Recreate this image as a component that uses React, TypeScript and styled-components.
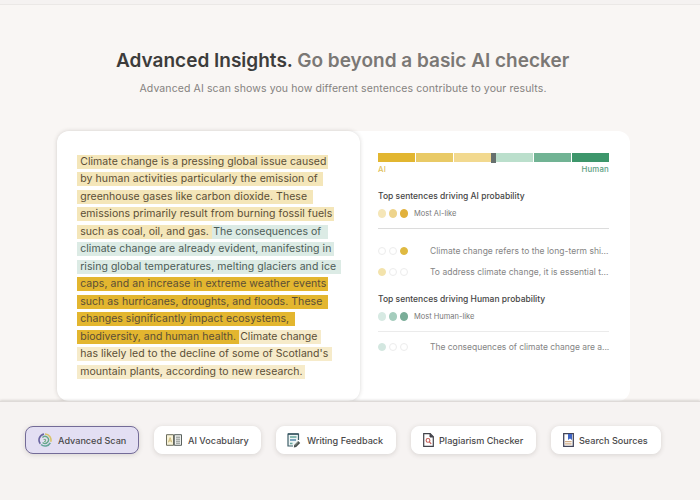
import React from "react";
import styled, { createGlobalStyle } from "styled-components";

const Global = createGlobalStyle`
  * { box-sizing: border-box; }
  body { margin: 0; background: #f9f6f4; font-family: Inter, "Liberation Sans", sans-serif; }
`;

const Page = styled.main`
  width: 700px;
  height: 500px;
  display: flex;
  flex-direction: column;
  overflow: hidden;
  background: #f9f6f4;
`;

const TopEdge = styled.div`
  flex: none;
  height: 5px;
  background: #f5f2f1;
  border-bottom: 1px solid #ebe8e6;
`;

const Showcase = styled.section`
  flex: none;
  height: 396px;
  display: flex;
  flex-direction: column;
`;

const Title = styled.h1`
  margin: 43px 0 0 116px;
  font-size: 19px;
  line-height: 25px;
  font-weight: 600;
  letter-spacing: 0;
  color: #3d3c3b;
  white-space: nowrap;
`;

const Muted = styled.span`
  color: #7b7875;
`;

const Subtitle = styled.p`
  margin: 9px 0 0 139.5px;
  font-size: 10.5px;
  line-height: 14px;
  letter-spacing: 0.1px;
  color: #858280;
  white-space: nowrap;
`;

const Panels = styled.div`
  flex: none;
  display: flex;
  margin: 35px 0 0 57px;
  width: 573px;
  height: 270px;
  background: #fff;
  border-radius: 12px;
`;

const PassageCard = styled.article`
  flex: none;
  width: 303px;
  height: 270px;
  padding: 22px 0 0 20px;
  display: flex;
  flex-direction: column;
  background: #fff;
  border-radius: 12px;
  box-shadow: 0 0 4px rgba(60, 50, 45, 0.2);
`;

const Line = styled.div`
  flex: none;
  display: flex;
  align-items: center;
  height: 17.5px;
`;

const tones = { pale: "#f4e6b9", green: "#dcebe5", gold: "#e3b62f", faint: "#f6ebca" };

const Mark = styled.span<{ $tone: keyof typeof tones; $width: number; $inset?: number; $spacing?: number }>`
  flex: none;
  width: ${(p) => p.$width}px;
  height: 14px;
  padding-left: ${(p) => p.$inset ?? 3.2}px;
  background: ${(p) => tones[p.$tone]};
  color: ${(p) => (p.$tone === "green" ? "#4c5c57" : "#5b4e36")};
  font-size: 10.5px;
  line-height: 14px;
  letter-spacing: ${(p) => p.$spacing ?? 0.05}px;
  white-space: nowrap;
`;

const Report = styled.aside`
  width: 231px;
  margin-left: 18px;
  padding-top: 22px;
  display: flex;
  flex-direction: column;
`;

const Scale = styled.div`
  display: flex;
  flex: none;
  height: 9px;
  gap: 1.5px;
`;

const Segment = styled.span<{ $color: string }>`
  flex: 1;
  background: ${(p) => p.$color};
`;

const Marker = styled.span`
  flex: none;
  width: 4.5px;
  margin: 0 -1px;
  height: 10px;
  background: #66706e;
`;

const ScaleLabels = styled.div`
  display: flex;
  justify-content: space-between;
  height: 14px;
  line-height: 15px;
  font-size: 7.8px;
  letter-spacing: 0.2px;
  font-weight: 500;
`;

const AiLabel = styled.span`
  color: #dfc15c;
`;

const HumanLabel = styled.span`
  color: #5c9e82;
`;

const Heading = styled.h2<{ $top: number }>`
  margin: ${(p) => p.$top}px 0 0;
  font-size: 8.5px;
  line-height: 12px;
  font-weight: 500;
  letter-spacing: 0.01px;
  color: #454545;
  white-space: nowrap;
`;

const Legend = styled.div<{ $rule: string }>`
  display: flex;
  align-items: center;
  flex: none;
  height: 27px;
  padding-bottom: 3px;
  border-bottom: 1px solid ${(p) => p.$rule};
  font-size: 7.5px;
  color: #777;
`;

const Dots = styled.span`
  display: flex;
  flex: none;
  gap: 2.6px;
  width: 36px;
`;

const Dot = styled.i<{ $color?: string }>`
  width: 8.2px;
  height: 8.2px;
  border-radius: 50%;
  background: ${(p) => p.$color ?? "#fff"};
  border: 1px solid ${(p) => p.$color ?? "#ececec"};
`;

const Sentence = styled.div<{ $top?: number }>`
  display: flex;
  align-items: center;
  flex: none;
  height: 21.5px;
  margin-top: ${(p) => p.$top ?? 0}px;
  font-size: 8.5px;
  color: #858585;
  white-space: nowrap;
`;

const SentenceText = styled.span<{ $spacing: number }>`
  margin-left: 16px;
  letter-spacing: ${(p) => p.$spacing}px;
`;

const Toolbar = styled.nav`
  flex: 1;
  display: flex;
  gap: 15px;
  padding: 24px 0 0 25px;
  background: #f6f3f2;
  border-top: 1px solid #dedad8;
  box-shadow: 0 -1px 2px rgba(60, 50, 45, 0.16);
  z-index: 1;
`;

const ToolButton = styled.button<{ $width: number; $inset: number; $gap: number; $active?: boolean }>`
  display: flex;
  align-items: center;
  flex: none;
  width: ${(p) => p.$width}px;
  height: 28px;
  padding: 0 0 0 ${(p) => p.$inset}px;
  gap: ${(p) => p.$gap}px;
  border: 1px solid ${(p) => (p.$active ? "#736b98" : "#fff")};
  border-radius: 8px;
  background: ${(p) => (p.$active ? "#e3dff3" : "#fff")};
  box-shadow: 0 1px 5px rgba(60, 50, 45, 0.16);
  font-family: inherit;
  font-size: 9.1px;
  font-weight: 500;
  letter-spacing: 0;
  color: #494849;
  white-space: nowrap;
`;

const Icon = styled.svg`
  flex: none;
  display: block;
`;

const ScanIcon = () => (
  <Icon width="14" height="14" viewBox="0 0 14 14" fill="none" strokeWidth="1.6">
    <path d="M7 1a6 6 0 0 1 5.7 7.8" stroke="#d9c36c" />
    <path d="M12.3 9.8A6 6 0 0 1 3 11.5" stroke="#66a69a" />
    <path d="M2.3 10.7A6 6 0 0 1 6 1.1" stroke="#6864a0" />
    <path d="M4.4 4.5a3.5 3.5 0 1 1 .2 5" stroke="#65a98a" strokeWidth="1.4" />
    <path d="M5.6 6.4h2v2H6" stroke="#70af7e" strokeWidth="1" />
  </Icon>
);

const VocabularyIcon = () => (
  <Icon width="16" height="12" viewBox="0 0 16 12" fill="none">
    <path d="M.5.7h7v10.6h-7z" fill="#f8f3d9" stroke="#6c6d5e" />
    <path d="M8.3.7h7.2v10.6H8.3z" fill="#eef0ee" stroke="#59615e" />
    <path d="m2.4 8.3 1.7-4.7 1.6 4.7M3 6.9h2.2" stroke="#c5ae64" strokeWidth=".8" />
    <path d="M10 3.2h4M10 5.2h4M10 7.2h4M10 9.2h4" stroke="#69716e" strokeWidth=".8" />
  </Icon>
);

const FeedbackIcon = () => (
  <Icon width="14" height="15" viewBox="0 0 14 15" fill="none">
    <path d="M11.5 7V1H1v12h5" fill="#edf5f5" stroke="#3e5e68" strokeWidth="1.2" />
    <path d="M1 1h10.5" stroke="#304e5b" strokeWidth="1.4" />
    <path d="M3 4h6.5M3 10.4h2.5" stroke="#65a79c" strokeWidth="1.5" />
    <path d="M3 7h6" stroke="#5689ac" strokeWidth="1.5" />
    <path d="m7.2 12.1 4-4 2 2-4 4-2.4.5z" fill="#47504f" />
    <path d="m8.2 12.2 3.1-3.1" stroke="#b7c0ad" strokeWidth=".7" />
  </Icon>
);

const PlagiarismIcon = () => (
  <Icon width="11" height="14" viewBox="0 0 11 14" fill="none">
    <path d="M.7.7h6.5l3.1 3.1v9.5H.7z" fill="#fff" stroke="#42434a" strokeWidth="1.2" />
    <path d="M7 .7V4h3.3" fill="#42434a" stroke="#42434a" />
    <circle cx="5" cy="7.4" r="1.9" stroke="#c45c55" strokeWidth="1.1" />
    <path d="m6.4 8.9 1.8 2" stroke="#c45c55" strokeWidth="1.2" />
  </Icon>
);

const SourcesIcon = () => (
  <Icon width="11" height="14" viewBox="0 0 11 14" fill="none">
    <path d="M.7.7h9.6v12.6H.7z" fill="#fff" stroke="#42455a" strokeWidth="1.3" />
    <path d="M5 1h4v6L7 5.5 5 7z" fill="#3e65c5" />
    <path d="M2 8.7h6.6M2 10.9h6.6" stroke="#cfac86" strokeWidth="1.2" />
  </Icon>
);

export default function App() {
  return (
    <Page>
      <Global />
      <TopEdge />
      <Showcase>
        <Title>
          Advanced Insights. <Muted>Go beyond a basic AI checker</Muted>
        </Title>
        <Subtitle>Advanced AI scan shows you how different sentences contribute to your results.</Subtitle>
        <Panels>
          <PassageCard>
            <Line><Mark $tone="pale" $width={251}>Climate change is a pressing global issue caused</Mark></Line>
            <Line><Mark $tone="pale" $width={246} $spacing={0.09}>by human activities particularly the emission of</Mark></Line>
            <Line><Mark $tone="pale" $width={236}>greenhouse gases like carbon dioxide. These</Mark></Line>
            <Line><Mark $tone="pale" $width={257} $spacing={0.04}>emissions primarily result from burning fossil fuels</Mark></Line>
            <Line>
              <Mark $tone="pale" $width={135} $spacing={0.03}>such as coal, oil, and gas.</Mark>
              <Mark $tone="green" $width={116} $inset={1.2} $spacing={0}>The consequences of</Mark>
            </Line>
            <Line><Mark $tone="green" $width={257}>climate change are already evident, manifesting in</Mark></Line>
            <Line><Mark $tone="green" $width={264}>rising global temperatures, melting glaciers and ice</Mark></Line>
            <Line><Mark $tone="gold" $width={251} $spacing={0.07}>caps, and an increase in extreme weather events</Mark></Line>
            <Line><Mark $tone="gold" $width={251}>such as hurricanes, droughts, and floods. These</Mark></Line>
            <Line><Mark $tone="gold" $width={218} $spacing={0.04}>changes significantly impact ecosystems,</Mark></Line>
            <Line>
              <Mark $tone="gold" $width={162} $spacing={0.03}>biodiversity, and human health.</Mark>
              <Mark $tone="faint" $width={82} $inset={1.2} $spacing={0}>Climate change</Mark>
            </Line>
            <Line><Mark $tone="faint" $width={255}>has likely led to the decline of some of Scotland's</Mark></Line>
            <Line><Mark $tone="faint" $width={228}>mountain plants, according to new research.</Mark></Line>
          </PassageCard>
          <Report>
            <Scale>
              <Segment $color="#e2b630" />
              <Segment $color="#e9ca66" />
              <Segment $color="#f2d98f" />
              <Marker />
              <Segment $color="#bbdfcc" />
              <Segment $color="#71b394" />
              <Segment $color="#3d966b" />
            </Scale>
            <ScaleLabels>
              <AiLabel>AI</AiLabel>
              <HumanLabel>Human</HumanLabel>
            </ScaleLabels>
            <Heading $top={14}>Top sentences driving AI probability</Heading>
            <Legend $rule="#dcdcdc">
              <Dots><Dot $color="#f5e6b8" /><Dot $color="#eed48c" /><Dot $color="#e1b13c" /></Dots>
              Most AI-like
            </Legend>
            <Sentence $top={11}>
              <Dots><Dot /><Dot /><Dot $color="#dfb941" /></Dots>
              <SentenceText $spacing={0.03}>Climate change refers to the long-term shi...</SentenceText>
            </Sentence>
            <Sentence>
              <Dots><Dot $color="#f3e3ac" /><Dot /><Dot /></Dots>
              <SentenceText $spacing={0.03}>To address climate change, it is essential t...</SentenceText>
            </Sentence>
            <Heading $top={10}>Top sentences driving Human probability</Heading>
            <Legend $rule="#ebebeb">
              <Dots><Dot $color="#d7eae3" /><Dot $color="#a5cdbd" /><Dot $color="#7aad98" /></Dots>
              Most Human-like
            </Legend>
            <Sentence $top={4}>
              <Dots><Dot $color="#d3e7e0" /><Dot /><Dot /></Dots>
              <SentenceText $spacing={-0.03}>The consequences of climate change are a...</SentenceText>
            </Sentence>
          </Report>
        </Panels>
      </Showcase>
      <Toolbar>
        <ToolButton $active $width={114} $inset={12} $gap={6}><ScanIcon />Advanced Scan</ToolButton>
        <ToolButton $width={107} $inset={11} $gap={6}><VocabularyIcon />AI Vocabulary</ToolButton>
        <ToolButton $width={120} $inset={10} $gap={6}><FeedbackIcon />Writing Feedback</ToolButton>
        <ToolButton $width={125} $inset={11} $gap={5}><PlagiarismIcon />Plagiarism Checker</ToolButton>
        <ToolButton $width={110} $inset={11} $gap={5}><SourcesIcon />Search Sources</ToolButton>
      </Toolbar>
    </Page>
  );
}
